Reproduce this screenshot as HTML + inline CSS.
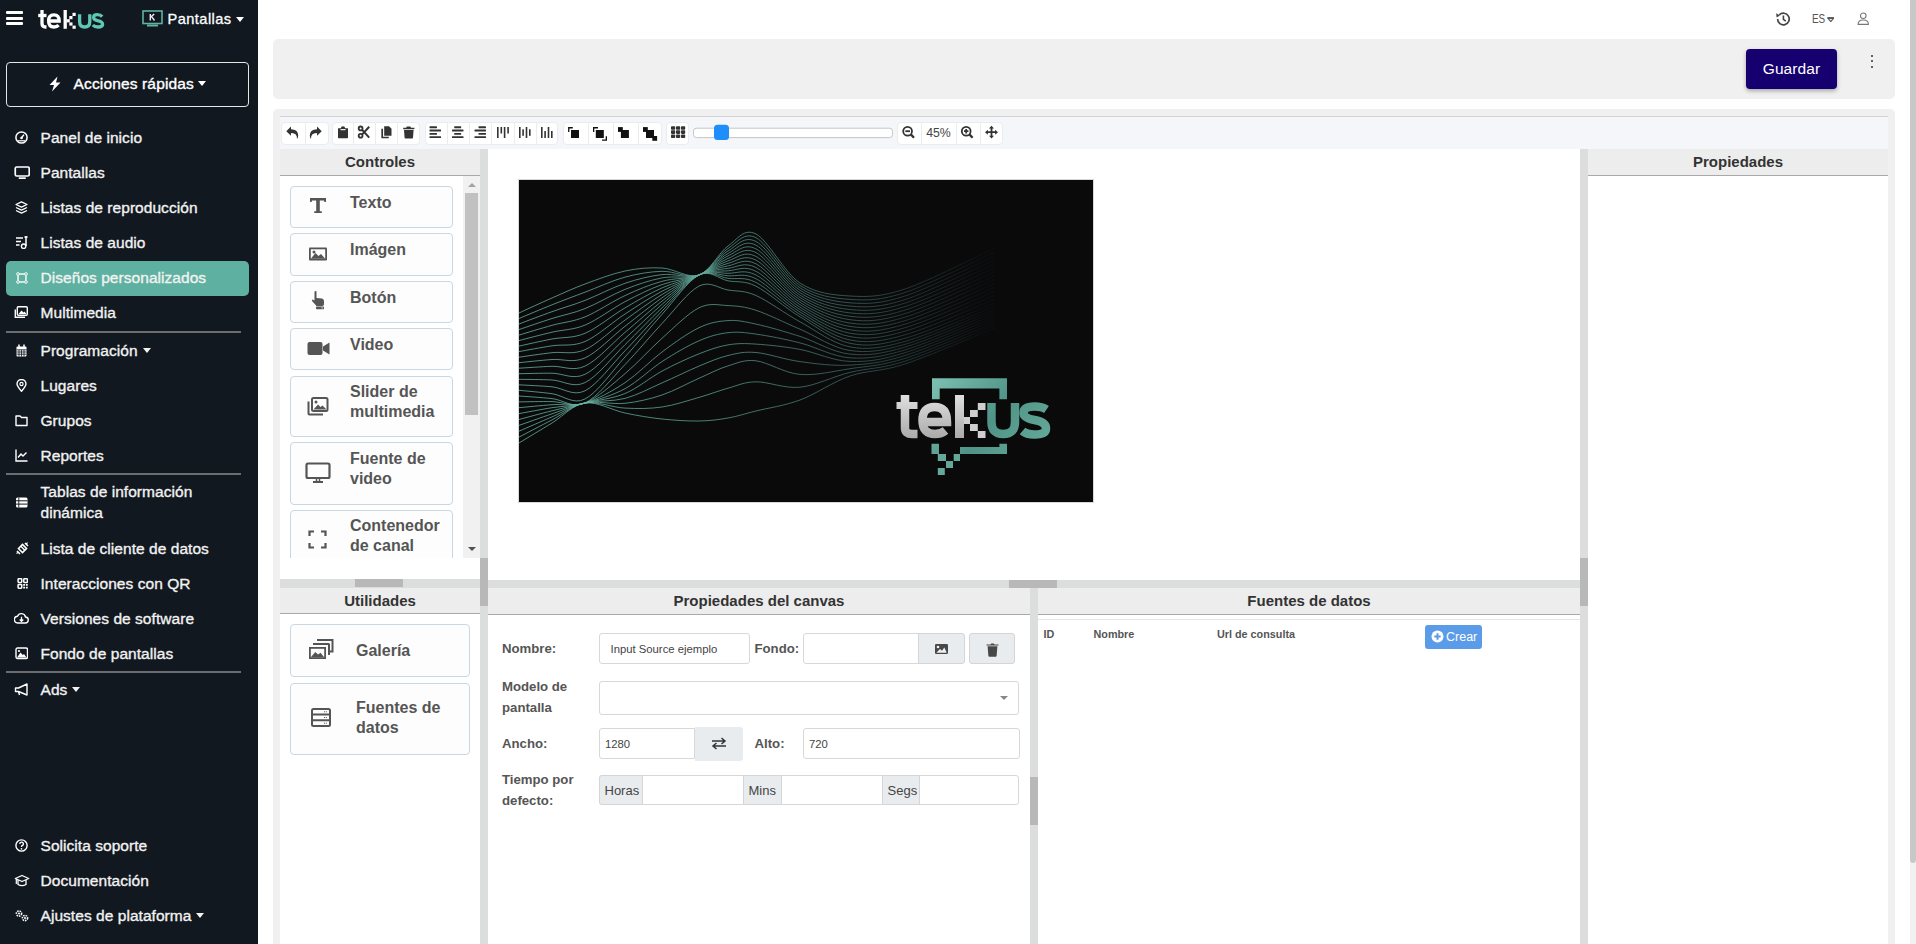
<!DOCTYPE html>
<html><head><meta charset="utf-8">
<style>
*{box-sizing:border-box;margin:0;padding:0}
html,body{width:1916px;height:944px;overflow:hidden;background:#fff;font-family:"Liberation Sans",sans-serif}
.a{position:absolute}
#sb{position:absolute;left:0;top:0;width:258px;height:944px;background:#111820;color:#f4f4f4}
.mi{position:absolute;left:6px;width:243px;height:35px;font-size:15.5px;line-height:35px;color:#f2f2f2;white-space:nowrap;letter-spacing:0.05px;-webkit-text-stroke:0.35px #f2f2f2}
.mi .t{position:absolute;left:34.5px;top:0}
.mi svg{position:absolute;left:9px;top:11px;width:13px;height:13px}
.sep{position:absolute;left:6px;width:235px;height:2px;background:#6b6d71}
.car{display:inline-block;width:0;height:0;border-left:4.5px solid transparent;border-right:4.5px solid transparent;border-top:5px solid #f2f2f2;vertical-align:middle;margin-left:5px;position:relative;top:-1px}
/* main */
.panel{position:absolute;background:#f0f0f0;border-radius:5px}
.hdr{position:absolute;background:#ededed;border-bottom:1px solid #a9a9a9;font-weight:bold;font-size:15px;color:#333;text-align:center;line-height:26px;height:26px}
.rz{position:absolute;background:#dcdedd}
.grip{position:absolute;background:#b8b8b8}
.ctl{position:absolute;left:290px;width:163px;border:1px solid #c9d7e2;border-radius:4px;background:#fdfdfd;color:#555;font-weight:bold;font-size:16px}
.ctl .t{position:absolute;left:59px;line-height:20px}
.ctl svg{position:absolute}
.lbl{position:absolute;font-weight:bold;font-size:13.2px;color:#555;line-height:21px}
.inp{position:absolute;border:1px solid #d8d8d8;border-radius:3px;background:#fff;font-size:11.3px;color:#444}
.btng{position:absolute;background:#e9ecef;border:1px solid #d5d5d5;border-radius:3px}
.tb{position:absolute;top:121.5px;height:23px;background:#fff;border-radius:4px;border:1px solid #eaecf0}
.tb i{position:absolute;top:0;height:21px;border-left:1px solid #eaecf0}
</style></head><body>

<!-- SIDEBAR -->
<div id="sb">
 <!-- hamburger -->
 <div class="a" style="left:6px;top:11px;width:17px;height:2.8px;background:#fff;border-radius:1px"></div>
 <div class="a" style="left:6px;top:16.8px;width:17px;height:2.8px;background:#fff;border-radius:1px"></div>
 <div class="a" style="left:6px;top:22.4px;width:17px;height:2.8px;background:#fff;border-radius:1px"></div>
 <!-- logo -->
 <svg class="a" style="left:36px;top:8px" width="70" height="24" viewBox="0 0 70 24">
  <g fill="none" stroke="#fff" stroke-width="3.3">
   <path d="M6 2 V15.5 Q6 19 9.5 19 H10.5"/>
   <path d="M2.2 7.5 H10.5"/>
   <path d="M12.6 13 H23.2 Q23.2 6.9 17.9 6.9 Q12.6 6.9 12.6 13 Q12.6 19 18 19 Q21 19 22.6 17.2"/>
   <path d="M29.2 2 V20.8"/>
  </g>
  <g fill="#fff">
   <rect x="36.5" y="4.8" width="3.2" height="3.2"/>
   <rect x="33.3" y="8" width="3.2" height="3.2"/>
   <rect x="30.6" y="11.2" width="3.2" height="3.2"/>
   <rect x="33.3" y="14.4" width="3.2" height="3.2"/>
   <rect x="36.5" y="17.6" width="3.2" height="3.2"/>
  </g>
  <g fill="none" stroke="#5ec8b4" stroke-width="3.3">
   <path d="M43.6 6.2 V13.5 Q43.6 19 48.6 19 Q53.8 19 53.8 13.5 V6.2"/>
   <path d="M66.2 8.6 Q64.5 6.6 61.2 6.6 Q57.6 6.6 57.6 9.4 Q57.6 11.6 61.5 12.6 Q66.6 13.6 66.6 16.2 Q66.6 19 62 19 Q58.5 19 56.8 17"/>
  </g>
 </svg>
 <!-- monitor icon -->
 <svg class="a" style="left:142px;top:10px" width="21" height="17" viewBox="0 0 21 17">
  <rect x="1" y="1" width="19" height="12.5" fill="none" stroke="#5fb3a1" stroke-width="1.6"/>
  <rect x="5" y="14.5" width="11" height="2" fill="#5fb3a1"/>
  <path d="M8.3 4 V10.5 M8.3 7.6 L12.2 4 M9.6 6.6 L12.5 10.5" stroke="#eee" stroke-width="1.4" fill="none"/>
 </svg>
 <div class="a" style="left:167.5px;top:7px;font-size:14.6px;line-height:24px;color:#fff;letter-spacing:0.45px;-webkit-text-stroke:0.3px #fff">Pantallas</div>
 <div class="a" style="left:235.5px;top:17px;width:0;height:0;border-left:4.5px solid transparent;border-right:4.5px solid transparent;border-top:5.5px solid #fff"></div>

 <!-- acciones rapidas -->
 <div class="a" style="left:6px;top:62px;width:243px;height:45px;border:1.3px solid #e6e6e6;border-radius:4px"></div>
 <svg class="a" style="left:48px;top:76px" width="14" height="16" viewBox="0 0 14 16"><path d="M9.5 0.5 L1.5 9 H6 L4 15.5 L12.5 6.5 H8 Z" fill="#fff"/></svg>
 <div class="a" style="left:73.5px;top:72px;font-size:15.5px;line-height:24px;color:#fff;white-space:nowrap;letter-spacing:0.15px;-webkit-text-stroke:0.35px #fff">Acciones rápidas<span class="car" style="border-top-color:#fff;margin-left:4px"></span></div>

 <div class="mi" style="top:120px"><svg viewBox="0 0 13 13"><circle cx="6.5" cy="6.5" r="5.6" fill="none" stroke="#fff" stroke-width="1.5"/><path d="M6.5 6.8 L9 3.6" stroke="#fff" stroke-width="1.5"/><circle cx="6.5" cy="7" r="1.3" fill="#fff"/><path d="M3 9.8 H10" stroke="#fff" stroke-width="1.2"/></svg><span class="t">Panel de inicio</span></div>
 <div class="mi" style="top:155px"><svg viewBox="0 0 16 13" style="width:16.5px;height:13px;left:7.5px;top:11px"><rect x="1" y="1" width="14" height="9" rx="1.5" fill="none" stroke="#fff" stroke-width="1.7"/><rect x="4.5" y="11.3" width="7" height="1.7" fill="#fff"/></svg><span class="t">Pantallas</span></div>
 <div class="mi" style="top:190px"><svg viewBox="0 0 13 13"><path d="M6.5 0.8 L12 3.5 L6.5 6.2 L1 3.5 Z M1 6.5 L6.5 9.2 L12 6.5 M1 9.5 L6.5 12.2 L12 9.5" fill="none" stroke="#fff" stroke-width="1.3" stroke-linejoin="round"/></svg><span class="t">Listas de reproducción</span></div>
 <div class="mi" style="top:225px"><svg viewBox="0 0 13 13"><path d="M1 2 H8 M1 5.5 H6 M1 9 H4.5" stroke="#fff" stroke-width="1.5"/><path d="M11 1 V10" stroke="#fff" stroke-width="1.5"/><path d="M9.5 1 H12.5" stroke="#fff" stroke-width="1.8"/><circle cx="8.6" cy="10.2" r="2.2" fill="none" stroke="#fff" stroke-width="1.4"/></svg><span class="t">Listas de audio</span></div>
 <div class="a" style="left:6px;top:261px;width:243px;height:35px;background:#5eb1a0;border-radius:5px"></div>
 <div class="mi" style="top:260px"><svg viewBox="0 0 13 13" style="left:10px;top:11.5px;width:12px;height:12px"><rect x="2.2" y="2.2" width="8.6" height="8.6" fill="none" stroke="#fff" stroke-width="1.5"/><circle cx="2.2" cy="2.2" r="1.5" fill="#5eb1a0" stroke="#fff" stroke-width="1"/><circle cx="10.8" cy="2.2" r="1.5" fill="#5eb1a0" stroke="#fff" stroke-width="1"/><circle cx="2.2" cy="10.8" r="1.5" fill="#5eb1a0" stroke="#fff" stroke-width="1"/><circle cx="10.8" cy="10.8" r="1.5" fill="#5eb1a0" stroke="#fff" stroke-width="1"/></svg><span class="t">Diseños personalizados</span></div>
 <div class="mi" style="top:295px"><svg viewBox="0 0 13 13" style="width:14px;left:8px"><rect x="2.8" y="0.8" width="10" height="8.5" rx="1" fill="none" stroke="#fff" stroke-width="1.4"/><path d="M0.8 3.5 V11.2 H10.5" fill="none" stroke="#fff" stroke-width="1.4"/><path d="M4 8 L7 4.5 L9 6.5 L10 5.5 L12 8 Z" fill="#fff"/></svg><span class="t">Multimedia</span></div>
 <div class="sep" style="top:331px"></div>
 <div class="mi" style="top:333px"><svg viewBox="0 0 13 13"><rect x="1.5" y="2.5" width="10" height="10" rx="1" fill="#fff"/><path d="M4 0.5 V3 M9 0.5 V3" stroke="#fff" stroke-width="1.5"/><path d="M1.5 5.8 H11.5 M1.5 8 H11.5 M1.5 10.2 H11.5 M4 5.8 V12.5 M6.5 5.8 V12.5 M9 5.8 V12.5" stroke="#111820" stroke-width="0.8"/></svg><span class="t">Programación<span class="car"></span></span></div>
 <div class="mi" style="top:368px"><svg viewBox="0 0 13 13"><path d="M6.5 12.3 C3.5 8.8 2 6.8 2 5 A4.5 4.5 0 0 1 11 5 C11 6.8 9.5 8.8 6.5 12.3 Z" fill="none" stroke="#fff" stroke-width="1.4"/><circle cx="6.5" cy="5" r="1.6" fill="none" stroke="#fff" stroke-width="1.2"/></svg><span class="t">Lugares</span></div>
 <div class="mi" style="top:403px"><svg viewBox="0 0 13 13"><path d="M1 2 H5 L6.5 3.5 H12 V11.5 H1 Z" fill="none" stroke="#fff" stroke-width="1.4" stroke-linejoin="round"/></svg><span class="t">Grupos</span></div>
 <div class="mi" style="top:438px"><svg viewBox="0 0 13 13"><path d="M1 0.5 V12 H12.5" fill="none" stroke="#fff" stroke-width="1.4"/><path d="M3 8.5 L6 5 L8 7 L11.5 3.5" fill="none" stroke="#fff" stroke-width="1.4"/></svg><span class="t">Reportes</span></div>
 <div class="sep" style="top:473px"></div>
 <div class="mi" style="top:475px;height:55px"><svg viewBox="0 0 13 13" style="top:21px"><rect x="1" y="1.5" width="11.5" height="10" rx="1.5" fill="#fff"/><path d="M1 4.8 H12.5 M1 8.1 H12.5" stroke="#111820" stroke-width="1"/><path d="M3.8 1.5 V11.5" stroke="#111820" stroke-width="0.9"/></svg><span class="t" style="line-height:21px;top:6px">Tablas de información<br>dinámica</span></div>
 <div class="mi" style="top:531px"><svg viewBox="0 0 13 13" style="left:9.5px;top:11px;width:13px;height:13px"><path d="M2.5 6.5 L6.5 2.5 L10.5 6.5 L6.5 10.5 Z" fill="none" stroke="#fff" stroke-width="1.6"/><path d="M4.8 4.2 L8.8 8.2" stroke="#fff" stroke-width="1.4"/><path d="M9 1 L12 4 M1 9 L4 12" stroke="#fff" stroke-width="1.6"/><path d="M9.8 2.2 L11.6 0.6 M0.6 11.6 L2.2 9.8" stroke="#fff" stroke-width="1.2"/></svg><span class="t">Lista de cliente de datos</span></div>
 <div class="mi" style="top:566px"><svg viewBox="0 0 13 13" style="left:10.5px;top:12px;width:11.5px;height:11px"><rect x="1" y="1" width="4.3" height="4.3" rx="0.8" fill="none" stroke="#fff" stroke-width="1.8"/><rect x="7.7" y="1" width="4.3" height="4.3" rx="0.8" fill="none" stroke="#fff" stroke-width="1.8"/><rect x="1" y="7.7" width="4.3" height="4.3" rx="0.8" fill="none" stroke="#fff" stroke-width="1.8"/><path d="M7 7 H9.2 V9.2 H7 Z M10.2 7 H12.4 V9.2 H10.2 Z M7 10.2 H9.2 V12.4 H7 Z M10.2 10.2 H12.4 V12.4 H10.2 Z" fill="#fff"/></svg><span class="t">Interacciones con QR</span></div>
 <div class="mi" style="top:601px"><svg viewBox="0 0 14 13" style="width:15px;left:8px"><path d="M3.5 11 H10.5 A3 3 0 0 0 11 5 A4.2 4.2 0 0 0 3 4.2 A3.4 3.4 0 0 0 3.5 11 Z" fill="none" stroke="#fff" stroke-width="1.4"/><path d="M7 4.8 V9.2 M5.2 7.5 L7 9.3 L8.8 7.5" fill="none" stroke="#fff" stroke-width="1.3"/></svg><span class="t">Versiones de software</span></div>
 <div class="mi" style="top:636px"><svg viewBox="0 0 13 13"><rect x="1" y="1" width="11.5" height="10.5" rx="1.5" fill="none" stroke="#fff" stroke-width="1.4"/><path d="M2 10.5 L5.5 5.5 L7.8 8 L9 7 L11.5 10.5 Z" fill="#fff"/><circle cx="4" cy="4" r="1.1" fill="#fff"/></svg><span class="t">Fondo de pantallas</span></div>
 <div class="sep" style="top:671px"></div>
 <div class="mi" style="top:672px"><svg viewBox="0 0 14 13" style="width:15px;left:8px"><path d="M1 5 H4 L12.5 1 V12 L4 8.5 H1 Z" fill="none" stroke="#fff" stroke-width="1.4" stroke-linejoin="round"/><path d="M4 8.5 L5 12" stroke="#fff" stroke-width="1.4"/></svg><span class="t">Ads<span class="car"></span></span></div>

 <div class="mi" style="top:828px"><svg viewBox="0 0 13 13"><circle cx="6.5" cy="6.5" r="5.6" fill="none" stroke="#fff" stroke-width="1.4"/><path d="M4.8 5 A1.8 1.8 0 1 1 7 6.7 C6.6 6.9 6.5 7.2 6.5 8" fill="none" stroke="#fff" stroke-width="1.4"/><circle cx="6.5" cy="9.8" r="0.9" fill="#fff"/></svg><span class="t">Solicita soporte</span></div>
 <div class="mi" style="top:863px"><svg viewBox="0 0 15 13" style="width:16px;left:8px"><path d="M0.8 4.5 L7.5 1.5 L14.2 4.5 L7.5 7.5 Z" fill="none" stroke="#fff" stroke-width="1.3" stroke-linejoin="round"/><path d="M3.5 6 V10.5 Q7.5 12.8 11.5 10.5 V6" fill="none" stroke="#fff" stroke-width="1.3"/><path d="M1.8 5 V10" stroke="#fff" stroke-width="1.2"/></svg><span class="t">Documentación</span></div>
 <div class="mi" style="top:898px"><svg viewBox="0 0 15 13" style="width:16px;left:8px"><circle cx="4.5" cy="4.5" r="2.6" fill="none" stroke="#fff" stroke-width="1.6" stroke-dasharray="1.6 0.9"/><circle cx="4.5" cy="4.5" r="1" fill="#fff"/><circle cx="10.5" cy="9" r="2.6" fill="none" stroke="#fff" stroke-width="1.6" stroke-dasharray="1.6 0.9"/><circle cx="10.5" cy="9" r="1" fill="#fff"/></svg><span class="t">Ajustes de plataforma<span class="car"></span></span></div>
</div>

<!-- MAIN -->
<div id="main">
 <!-- top header icons -->
 <svg class="a" style="left:1775px;top:11px" width="16" height="16" viewBox="0 0 16 16"><path d="M2.6 8 A5.8 5.8 0 1 0 4.3 3.9" fill="none" stroke="#444" stroke-width="1.7"/><path d="M1.2 2.2 L4.9 4.4 L1.6 6.6 Z" fill="#444"/><path d="M8.4 4.6 V8.4 L10.8 10.2" fill="none" stroke="#444" stroke-width="1.6"/></svg>
 <div class="a" style="left:1811.5px;top:10.8px;font-size:12.4px;line-height:16px;color:#555;transform:scaleX(0.8);transform-origin:0 0">ES</div>
 <svg class="a" style="left:1826.5px;top:16.8px" width="7.5" height="5.5" viewBox="0 0 8 6"><path d="M0.7 0.9 H7.3 L4 5.1 Z" fill="none" stroke="#555" stroke-width="1.2" stroke-linejoin="round"/><path d="M0.7 1.2 H7.3" stroke="#555" stroke-width="1.8"/></svg>
 <svg class="a" style="left:1857px;top:12px" width="12.5" height="13.5" viewBox="0 0 14 15"><circle cx="7" cy="4.2" r="3.1" fill="none" stroke="#777" stroke-width="1.2"/><path d="M1.2 13.8 Q1.2 8.8 7 8.8 Q12.8 8.8 12.8 13.8 Z" fill="none" stroke="#777" stroke-width="1.2" stroke-linejoin="round"/></svg>

 <!-- top panel -->
 <div class="panel" style="left:273px;top:39px;width:1622px;height:60px"></div>
 <div class="a" style="left:1746px;top:49px;width:91px;height:40px;background:#16006f;border-radius:4px;box-shadow:0 2px 4px rgba(0,0,0,0.3);color:#fff;font-size:15.5px;line-height:40px;text-align:center;letter-spacing:0.1px">Guardar</div>
 <div class="a" style="left:1870.5px;top:54.5px;width:2.2px;height:2.2px;background:#333;border-radius:1px"></div>
 <div class="a" style="left:1870.5px;top:60px;width:2.2px;height:2.2px;background:#333;border-radius:1px"></div>
 <div class="a" style="left:1870.5px;top:65.5px;width:2.2px;height:2.2px;background:#333;border-radius:1px"></div>

 <!-- editor panel -->
 <div class="panel" style="left:273px;top:109px;width:1622px;height:860px"></div>
 <div class="a" style="left:280px;top:116px;width:1608px;height:1px;background:#d3d3d3"></div>
 <div class="a" style="left:280px;top:117px;width:1608px;height:32px;background:#f5f6fa"></div>
 <!-- toolbar groups -->
 <div class="tb" style="left:280.5px;width:48px"><i style="left:23px"></i></div>
 <div class="tb" style="left:332px;width:88px"><i style="left:20px"></i><i style="left:42px"></i><i style="left:64px"></i></div>
 <div class="tb" style="left:425px;width:133px"><i style="left:20.5px"></i><i style="left:42.5px"></i><i style="left:65px"></i><i style="left:87.5px"></i><i style="left:109.5px"></i></div>
 <div class="tb" style="left:562.5px;width:99.5px"><i style="left:24px"></i><i style="left:49px"></i><i style="left:74px"></i></div>
 <div class="tb" style="left:665.5px;width:23.5px"></div>
 <div class="tb" style="left:896.5px;width:106.5px"><i style="left:23px"></i><i style="left:58px"></i><i style="left:82px"></i></div>
 <svg class="a" style="left:280px;top:117px" width="730" height="32" viewBox="280 117 730 32">
  <g fill="#333">
   <!-- undo -->
   <path d="M286.3 131.2 L291 126.6 V129.3 Q298 129.3 298.2 135.5 Q298.2 137.5 297 139 Q297.4 132.8 291 133 V135.8 Z"/>
   <!-- redo -->
   <path d="M321.7 131.2 L317 126.6 V129.3 Q310 129.3 309.8 135.5 Q309.8 137.5 311 139 Q310.6 132.8 317 133 V135.8 Z"/>
   <!-- paste -->
   <path d="M338.3 128.3 H340.8 Q341 126.3 343 126.3 Q345 126.3 345.2 128.3 H347.7 Q348 128.3 348 129 V137.6 Q348 138.3 347.3 138.3 H338.7 Q338 138.3 338 137.6 V129 Q338 128.3 338.3 128.3 Z"/>
   <rect x="340.5" y="129.1" width="5" height="1.1" fill="#fff"/>
   <!-- trash -->
   <path d="M403.2 127.7 H406.2 L406.8 126.5 H410.4 L411 127.7 H414.4 V129.3 H403.2 Z M404 130 H413.6 L413 137.7 Q412.9 138.4 412.2 138.4 H405.4 Q404.7 138.4 404.6 137.7 Z"/>
   <!-- align icons -->
   <rect x="429.5" y="126.3" width="7.5" height="1.9" rx="0.4"/><rect x="429.5" y="129.6" width="11.5" height="1.9" rx="0.4"/><rect x="429.5" y="132.9" width="7.5" height="1.9" rx="0.4"/><rect x="429.5" y="136.2" width="11.5" height="1.9" rx="0.4"/>
   <rect x="454.2" y="126.3" width="7" height="1.9" rx="0.4"/><rect x="452" y="129.6" width="11.5" height="1.9" rx="0.4"/><rect x="454.2" y="132.9" width="7" height="1.9" rx="0.4"/><rect x="452" y="136.2" width="11.5" height="1.9" rx="0.4"/>
   <rect x="478.5" y="126.3" width="7.5" height="1.9" rx="0.4"/><rect x="474.5" y="129.6" width="11.5" height="1.9" rx="0.4"/><rect x="478.5" y="132.9" width="7.5" height="1.9" rx="0.4"/><rect x="474.5" y="136.2" width="11.5" height="1.9" rx="0.4"/>
   <!-- valign top -->
   <rect x="497" y="127" width="1.6" height="11"/><rect x="500.5" y="127" width="1.6" height="6.5"/><rect x="503.8" y="127" width="1.6" height="11"/><rect x="507.3" y="127" width="1.6" height="6.5"/>
   <!-- valign middle -->
   <rect x="519" y="127" width="1.6" height="11"/><rect x="522.3" y="129.3" width="1.6" height="6.5"/><rect x="525.7" y="127" width="1.6" height="11"/><rect x="529" y="129.3" width="1.6" height="6.5"/>
   <!-- valign bottom -->
   <rect x="541" y="127" width="1.6" height="11"/><rect x="544.3" y="131" width="1.6" height="7"/><rect x="547.7" y="127" width="1.6" height="11"/><rect x="551" y="131" width="1.6" height="7"/>
  </g>
  <g fill="#111">
   <!-- bring forward -->
   <path d="M568.1 127.1 H572.8 V128.4 H569.4 V131.9 H568.1 Z"/><rect x="571" y="130" width="8" height="8"/>
   <!-- bring to front -->
   <path d="M593 127.1 H598 V128.4 H594.3 V131.9 H593 Z"/><rect x="595.8" y="130" width="8" height="8"/><path d="M607 140.8 H602 V139.5 H605.7 V136.3 H607 Z"/>
   <!-- send backward -->
   <rect x="618" y="127.1" width="4.8" height="4.8"/><rect x="620.9" y="130" width="8" height="8"/>
   <!-- send to back -->
   <rect x="643" y="127.1" width="4.8" height="4.8"/><rect x="646" y="130" width="8" height="8"/><rect x="652.3" y="136" width="4.8" height="4.8"/>
  </g>
  <g fill="#333">
   <rect x="671" y="126.2" width="4.2" height="3.6" rx="0.8"/><rect x="676" y="126.2" width="4.2" height="3.6" rx="0.8"/><rect x="681" y="126.2" width="4.2" height="3.6" rx="0.8"/>
   <rect x="671" y="130.3" width="4.2" height="3.6" rx="0.8"/><rect x="676" y="130.3" width="4.2" height="3.6" rx="0.8"/><rect x="681" y="130.3" width="4.2" height="3.6" rx="0.8"/>
   <rect x="671" y="134.4" width="4.2" height="3.6" rx="0.8"/><rect x="676" y="134.4" width="4.2" height="3.6" rx="0.8"/><rect x="681" y="134.4" width="4.2" height="3.6" rx="0.8"/>
  </g>
  <!-- cut -->
  <g fill="none" stroke="#333" stroke-width="1.5">
   <circle cx="360.6" cy="135.8" r="1.9" stroke-width="1.8"/><circle cx="360.6" cy="128.4" r="1.9" stroke-width="1.8"/>
   <path d="M362.2 134.4 L369.2 126.8 M362.2 129.8 L369.2 137.6" stroke-width="2"/>
  </g>
  <!-- copy -->
  <path d="M382.2 128.8 V137.5 H388.8" fill="none" stroke="#333" stroke-width="1.7"/>
  <path d="M384.2 126.3 H389 L391.5 128.8 V135.7 H384.2 Z" fill="#333"/>
  <!-- slider -->
  <rect x="693.5" y="128.2" width="199" height="9.4" rx="3" fill="#fff" stroke="#c6c6c6" stroke-width="1"/>
  <rect x="714" y="124.8" width="15" height="15.2" rx="3.5" fill="#1e8efa"/>
  <!-- zoom out -->
  <g fill="none" stroke="#333" stroke-width="1.8"><circle cx="907.6" cy="131.2" r="4.4"/><path d="M910.8 134.4 L914 137.8" stroke-width="2.3"/><path d="M905.3 131.2 H910"/></g>
  <g fill="none" stroke="#333" stroke-width="1.8"><circle cx="966.2" cy="131.2" r="4.4"/><path d="M969.4 134.4 L972.6 137.8" stroke-width="2.3"/><path d="M964 131.2 H968.4 M966.2 129 V133.4"/></g>
  <!-- move -->
  <g fill="#333"><path d="M991.5 125.8 L994 128.6 H992.4 V131.3 H995.1 V129.7 L998 132.2 L995.1 134.7 V133.1 H992.4 V135.8 H994 L991.5 138.6 L989 135.8 H990.6 V133.1 H987.9 V134.7 L985 132.2 L987.9 129.7 V131.3 H990.6 V128.6 H989 Z"/></g>
 </svg>
 <div class="a" style="left:921px;top:124.5px;width:35px;text-align:center;font-size:12.3px;line-height:16px;color:#444">45%</div>
 <!-- WEST PANE -->
 <div class="a" style="left:280px;top:149px;width:200px;height:795px;background:#fff"></div>
 <div class="hdr" style="left:280px;top:149px;width:200px;height:27px">Controles</div>
 <!-- controls scrollbar -->
 <div class="a" style="left:463px;top:176px;width:17px;height:382px;background:#f1f1f1"></div>
 <div class="a" style="left:465px;top:193px;width:13px;height:222px;background:#c1c1c1"></div>
 <div class="a" style="left:467.5px;top:183px;width:0;height:0;border-left:4px solid transparent;border-right:4px solid transparent;border-bottom:4px solid #a3a3a3"></div>
 <div class="a" style="left:467.5px;top:547px;width:0;height:0;border-left:4px solid transparent;border-right:4px solid transparent;border-top:4px solid #505050"></div>
 <!-- control items -->
 <div class="ctl" style="top:186px;height:42px"><span class="t" style="top:6px">Texto</span>
  <svg style="left:18px;top:10px" width="18" height="17" viewBox="0 0 18 17"><path d="M1 1 H17 V5 H15.6 L14.8 3.4 H10.8 V14.2 H12.8 V16 H5.2 V14.2 H7.2 V3.4 H3.2 L2.4 5 H1 Z" fill="#555"/></svg></div>
 <div class="ctl" style="top:233px;height:42.5px"><span class="t" style="top:6px">Imágen</span>
  <svg style="left:16.5px;top:11.5px" width="20" height="16" viewBox="0 0 20 16"><rect x="1" y="1.5" width="18" height="13" rx="1" fill="#555"/><rect x="2.8" y="3.3" width="14.4" height="9.4" fill="#fdfdfd"/><path d="M2.8 12.7 L7.5 7 L10.5 10 L13 8 L17.2 12.7 Z" fill="#555"/><circle cx="6" cy="6" r="1.5" fill="#555"/></svg></div>
 <div class="ctl" style="top:281px;height:42px"><span class="t" style="top:6px">Botón</span>
  <svg style="left:19px;top:8px" width="16" height="20" viewBox="0 0 16 20"><path d="M4.5 1.5 Q5.5 0.5 6.5 1.5 V8 L12 8.5 Q14 9 14 11 V14.5 Q13.5 16 12 16 H6.5 L2 11 Q1.5 10 2.5 9.5 L4.5 10.5 Z" fill="#555"/><rect x="6" y="16.6" width="8" height="2.6" rx="0.8" fill="#555"/><rect x="11.5" y="17.4" width="1.2" height="1" fill="#fff"/></svg></div>
 <div class="ctl" style="top:328px;height:42px"><span class="t" style="top:6px">Video</span>
  <svg style="left:16px;top:11px" width="24" height="17" viewBox="0 0 24 17"><rect x="0.5" y="2" width="15" height="13" rx="2" fill="#555"/><path d="M16 6.5 L22.5 2.5 V14.5 L16 10.5 Z" fill="#555"/></svg></div>
 <div class="ctl" style="top:376px;height:61px"><span class="t" style="top:5px">Slider de<br>multimedia</span>
  <svg style="left:16px;top:19px" width="22" height="20" viewBox="0 0 22 20"><path d="M1.5 5.5 V17.5 Q1.5 18.5 2.5 18.5 H16" fill="none" stroke="#555" stroke-width="2"/><rect x="5" y="2" width="15.5" height="13" rx="1.5" fill="none" stroke="#555" stroke-width="2"/><path d="M6.5 13.5 L11 8.5 L13.5 11 L15.5 9.5 L19.5 13.5 Z" fill="#555"/><circle cx="9" cy="6" r="1.5" fill="#555"/></svg></div>
 <div class="ctl" style="top:442px;height:62.5px"><span class="t" style="top:6px">Fuente de<br>video</span>
  <svg style="left:14px;top:19px" width="26" height="22" viewBox="0 0 26 22"><rect x="1.5" y="1.5" width="23" height="14.5" rx="1.5" fill="none" stroke="#555" stroke-width="2.2"/><path d="M8 20 H18" stroke="#555" stroke-width="2"/><path d="M11.5 16 V20 M14.5 16 V20" stroke="#555" stroke-width="1.5"/></svg></div>
 <div class="a" style="left:280px;top:510px;width:183px;height:48px;overflow:hidden">
  <div class="ctl" style="left:10px;top:0;height:62px"><span class="t" style="top:5px">Contenedor<br>de canal</span>
   <svg style="left:17px;top:19px" width="19" height="19" viewBox="0 0 19 19"><path d="M1.5 6 V1.5 H6 M13 1.5 H17.5 V6 M17.5 13 V17.5 H13 M6 17.5 H1.5 V13" fill="none" stroke="#555" stroke-width="2.2"/></svg></div>
 </div>
 <!-- west horizontal resizer -->
 <div class="rz" style="left:280px;top:579px;width:200px;height:9px"></div>
 <div class="grip" style="left:355px;top:579px;width:48px;height:8px"></div>
 <div class="hdr" style="left:280px;top:588px;width:200px;height:26px;line-height:25px">Utilidades</div>
 <div class="ctl" style="top:624px;height:53px;width:180px"><span class="t" style="left:65px;top:16px">Galería</span>
  <svg style="left:17px;top:13px" width="26" height="22" viewBox="0 0 26 22"><path d="M1 9 H18 V21 H1 Z" fill="#555"/><rect x="2.8" y="10.8" width="13.4" height="8.4" fill="#fdfdfd"/><path d="M2.8 19.2 L7.3 14 L10 16.5 L12.5 14.8 L16.2 19.2 Z" fill="#555"/><path d="M5 6 H21 V17" fill="none" stroke="#555" stroke-width="2"/><path d="M9 2 H24.5 V13.5 H22" fill="none" stroke="#555" stroke-width="2"/><rect x="21.3" y="4.5" width="1.3" height="1.3" fill="#fdfdfd"/></svg></div>
 <div class="ctl" style="top:683px;height:72px;width:180px"><span class="t" style="left:65px;top:14px">Fuentes de<br>datos</span>
  <svg style="left:20px;top:24px" width="21" height="19" viewBox="0 0 21 19"><rect x="1" y="1" width="18" height="17" rx="1.5" fill="none" stroke="#555" stroke-width="2"/><path d="M1 6.6 H19 M1 12.3 H19" stroke="#555" stroke-width="2"/><path d="M13 3.8 H16.5 M13 9.5 H16.5 M13 15.2 H16.5" stroke="#555" stroke-width="1" stroke-dasharray="1 0.8"/></svg></div>

 <!-- west vertical resizer -->
 <div class="rz" style="left:480px;top:149px;width:8px;height:795px"></div>
 <div class="grip" style="left:480px;top:558px;width:8px;height:48px"></div>

 <!-- CENTER -->
 <div class="a" style="left:488px;top:149px;width:1092px;height:431px;background:#fff"></div>
 <div class="rz" style="left:488px;top:580px;width:1092px;height:8px"></div>
 <div class="grip" style="left:1009px;top:580px;width:48px;height:8px"></div>
 <!-- south west -->
 <div class="a" style="left:488px;top:588px;width:542px;height:356px;background:#fff"></div>
 <div class="hdr" style="left:488px;top:588px;width:542px;height:27px;line-height:26px">Propiedades del canvas</div>
 <div class="rz" style="left:1030px;top:588px;width:8px;height:356px"></div>
 <div class="grip" style="left:1030px;top:777px;width:8px;height:48px"></div>
 <!-- south east -->
 <div class="a" style="left:1038px;top:588px;width:542px;height:356px;background:#fff"></div>
 <div class="hdr" style="left:1038px;top:588px;width:542px;height:27px;line-height:26px">Fuentes de datos</div>
 <!-- east resizer -->
 <div class="rz" style="left:1580px;top:149px;width:8px;height:795px"></div>
 <div class="grip" style="left:1580px;top:558px;width:8px;height:48px"></div>
 <!-- EAST -->
 <div class="a" style="left:1588px;top:149px;width:300px;height:795px;background:#fff"></div>
 <div class="hdr" style="left:1588px;top:149px;width:300px;height:27px">Propiedades</div>
 <!-- canvas props form -->
 <div class="lbl" style="left:502px;top:638px">Nombre:</div>
 <div class="inp" style="left:599px;top:633px;width:151px;height:31px;padding-left:10.5px;line-height:30px">Input Source ejemplo</div>
 <div class="lbl" style="left:754.5px;top:638px">Fondo:</div>
 <div class="inp" style="left:803px;top:633px;width:116px;height:31px;border-radius:3px 0 0 3px"></div>
 <div class="btng" style="left:918px;top:633px;width:46.5px;height:31px;border-radius:0 3px 3px 0"></div>
 <svg class="a" style="left:935px;top:644px" width="13" height="10" viewBox="0 0 13 10"><rect x="0" y="0" width="13" height="10" rx="1.2" fill="#474747"/><path d="M1.3 8.8 L5 5 L7 6.8 L9.3 3.6 L11.8 8.8 Z" fill="#eef0f2"/><circle cx="3" cy="3" r="1.3" fill="#eef0f2"/></svg>
 <div class="btng" style="left:969px;top:633px;width:45.5px;height:31px"></div>
 <svg class="a" style="left:985.5px;top:643px" width="13" height="14" viewBox="0 0 13 14"><path d="M0.5 1.4 H4.5 L5.2 0.4 H7.8 L8.5 1.4 H12.5 V2.6 H0.5 Z M1.6 3.2 H11.4 L10.6 13 Q10.5 13.8 9.6 13.8 H3.4 Q2.5 13.8 2.4 13 Z" fill="#474747"/></svg>

 <div class="lbl" style="left:502px;top:676px">Modelo de<br>pantalla</div>
 <div class="inp" style="left:599px;top:681px;width:420px;height:33.5px"></div>
 <div class="a" style="left:999.5px;top:695.5px;width:0;height:0;border-left:4px solid transparent;border-right:4px solid transparent;border-top:4px solid #888"></div>

 <div class="lbl" style="left:502px;top:733px">Ancho:</div>
 <div class="inp" style="left:599px;top:728px;width:96px;height:31px;padding-left:5px;line-height:30px;border-radius:3px 0 0 3px">1280</div>
 <div class="btng" style="left:695px;top:727px;width:48px;height:33.5px;border:none;border-radius:0 3px 3px 0"></div>
 <svg class="a" style="left:711px;top:737px" width="16" height="13" viewBox="0 0 16 13"><path d="M1 4 H14 M10.5 1 L14 4 L10.5 7 M15 9 H2 M5.5 6 L2 9 L5.5 12" fill="none" stroke="#333" stroke-width="1.5"/></svg>
 <div class="lbl" style="left:754.5px;top:733px">Alto:</div>
 <div class="inp" style="left:803px;top:728px;width:216.5px;height:31px;padding-left:5px;line-height:30px">720</div>

 <div class="lbl" style="left:502px;top:769px">Tiempo por<br>defecto:</div>
 <div class="inp" style="left:599px;top:775px;width:420px;height:30px"></div>
 <div class="btng" style="left:599px;top:775px;width:44px;height:30px;border-radius:3px 0 0 3px;font-size:13px;color:#444;line-height:30px;padding-left:4.5px">Horas</div>
 <div class="btng" style="left:743px;top:775px;width:38.5px;height:30px;border-radius:0;font-size:13px;color:#444;line-height:30px;padding-left:4.5px">Mins</div>
 <div class="btng" style="left:882px;top:775px;width:38px;height:30px;border-radius:0;font-size:13px;color:#444;line-height:30px;padding-left:4.5px">Segs</div>

 <!-- data sources table -->
 <div class="a" style="left:1038px;top:618.5px;width:542px;height:1px;background:#e6e6e6"></div>
 <div class="a" style="left:1043.5px;top:627px;font-size:10.8px;font-weight:bold;color:#555;line-height:14px">ID</div>
 <div class="a" style="left:1093.5px;top:627px;font-size:10.8px;font-weight:bold;color:#555;line-height:14px">Nombre</div>
 <div class="a" style="left:1217px;top:627px;font-size:10.8px;font-weight:bold;color:#555;line-height:14px">Url de consulta</div>
 <div class="a" style="left:1425px;top:625px;width:57px;height:23.5px;background:#5b9ce8;border-radius:3px;color:#fff;font-size:12.5px;line-height:24.5px;padding-left:21px">Crear</div>
 <svg class="a" style="left:1431px;top:629.5px" width="14" height="14" viewBox="0 0 14 14"><circle cx="6.5" cy="6.5" r="6" fill="#fff"/><path d="M6.5 3.3 V9.7 M3.3 6.5 H9.7" stroke="#5b9ce8" stroke-width="2"/></svg>

 <!-- CANVAS IMAGE -->
 <div class="a" style="left:518px;top:179px;width:576px;height:324px;border:1px solid #d8d8d8;background:#0a0a0a"></div>
 <svg class="a" style="left:519px;top:180px" width="574" height="322" viewBox="0 1 574 322">
  <defs>
   <linearGradient id="wg" gradientUnits="userSpaceOnUse" x1="0" y1="0" x2="480" y2="0">
    <stop offset="0" stop-color="#6cb8a8"/><stop offset="0.4" stop-color="#5fa597"/><stop offset="0.7" stop-color="#3d6462"/><stop offset="0.97" stop-color="#0d1114"/>
   </linearGradient>
   <linearGradient id="silver" gradientUnits="userSpaceOnUse" x1="0" y1="214" x2="0" y2="260"><stop offset="0" stop-color="#e2e2e2"/><stop offset="1" stop-color="#a9a9a9"/></linearGradient>
   <linearGradient id="teal" gradientUnits="userSpaceOnUse" x1="410" y1="199" x2="530" y2="290"><stop offset="0" stop-color="#7fc2b4"/><stop offset="0.5" stop-color="#4f9486"/><stop offset="1" stop-color="#6aae9f"/></linearGradient>
  </defs>
  <g fill="none" stroke="url(#wg)" stroke-width="0.75" opacity="1">
<path d="M-14.0 141.0 C-11.7 139.8 -7.8 137.7 0.0 134.0 C7.8 130.3 22.0 123.8 33.0 119.0 C44.0 114.2 53.8 109.5 66.0 105.0 C78.2 100.5 93.2 94.7 106.0 92.0 C118.8 89.3 130.7 88.3 143.0 89.0 C155.3 89.7 169.0 99.7 180.0 96.0 C191.0 92.3 199.5 73.8 209.0 67.0 C218.5 60.2 225.0 48.8 237.0 55.0 C249.0 61.2 265.3 93.7 281.0 104.0 C296.7 114.3 313.5 116.0 331.0 117.0 C348.5 118.0 361.8 118.0 386.0 110.0 C410.2 102.0 461.0 75.8 476.0 69.0"/>
<path d="M-14.0 145.9 C-11.7 144.8 -7.8 142.9 0.0 139.5 C7.8 136.2 22.0 130.2 33.0 125.8 C44.0 121.4 53.8 117.8 66.0 113.2 C78.2 108.6 93.2 101.6 106.0 98.1 C118.8 94.7 130.7 92.7 143.0 92.3 C155.3 92.0 169.0 99.8 180.0 96.0 C191.0 92.2 199.5 75.7 209.0 69.5 C218.5 63.3 225.0 52.6 237.0 58.7 C249.0 64.9 265.3 96.1 281.0 106.4 C296.7 116.7 313.5 119.2 331.0 120.4 C348.5 121.6 361.8 121.4 386.0 113.5 C410.2 105.6 461.0 79.7 476.0 72.9"/>
<path d="M-14.0 150.8 C-11.7 149.8 -7.8 148.1 0.0 145.0 C7.8 142.0 22.0 136.6 33.0 132.7 C44.0 128.7 53.8 126.2 66.0 121.4 C78.2 116.7 93.2 108.6 106.0 104.3 C118.8 100.0 130.7 97.0 143.0 95.6 C155.3 94.2 169.0 99.9 180.0 96.0 C191.0 92.1 199.5 77.6 209.0 72.0 C218.5 66.4 225.0 56.3 237.0 62.5 C249.0 68.6 265.3 98.6 281.0 108.8 C296.7 119.0 313.5 122.4 331.0 123.8 C348.5 125.1 361.8 124.9 386.0 117.0 C410.2 109.2 461.0 83.6 476.0 76.9"/>
<path d="M-14.0 155.7 C-11.7 154.8 -7.8 153.3 0.0 150.6 C7.8 147.9 22.0 143.0 33.0 139.5 C44.0 136.0 53.8 134.5 66.0 129.6 C78.2 124.8 93.2 115.5 106.0 110.4 C118.8 105.3 130.7 101.3 143.0 98.9 C155.3 96.5 169.0 100.1 180.0 96.0 C191.0 91.9 199.5 79.4 209.0 74.5 C218.5 69.5 225.0 60.0 237.0 66.2 C249.0 72.3 265.3 101.1 281.0 111.2 C296.7 121.4 313.5 125.6 331.0 127.1 C348.5 128.7 361.8 128.3 386.0 120.6 C410.2 112.8 461.0 87.4 476.0 80.8"/>
<path d="M-14.0 160.6 C-11.7 159.8 -7.8 158.5 0.0 156.1 C7.8 153.7 22.0 149.4 33.0 146.3 C44.0 143.3 53.8 142.8 66.0 137.9 C78.2 132.9 93.2 122.5 106.0 116.6 C118.8 110.6 130.7 105.7 143.0 102.3 C155.3 98.8 169.0 100.2 180.0 96.0 C191.0 91.8 199.5 81.3 209.0 76.9 C218.5 72.6 225.0 63.8 237.0 69.9 C249.0 76.0 265.3 103.6 281.0 113.7 C296.7 123.8 313.5 128.8 331.0 130.5 C348.5 132.3 361.8 131.7 386.0 124.1 C410.2 116.4 461.0 91.3 476.0 84.7"/>
<path d="M-14.0 165.5 C-11.7 164.9 -7.8 163.7 0.0 161.6 C7.8 159.5 22.0 155.8 33.0 153.2 C44.0 150.6 53.8 151.1 66.0 146.1 C78.2 141.0 93.2 129.5 106.0 122.7 C118.8 116.0 130.7 110.0 143.0 105.6 C155.3 101.1 169.0 100.4 180.0 96.0 C191.0 91.6 199.5 83.2 209.0 79.4 C218.5 75.7 225.0 67.5 237.0 73.6 C249.0 79.7 265.3 106.0 281.0 116.1 C296.7 126.1 313.5 132.0 331.0 133.9 C348.5 135.8 361.8 135.1 386.0 127.6 C410.2 120.1 461.0 95.2 476.0 88.7"/>
<path d="M-14.0 170.4 C-11.7 169.9 -7.8 168.9 0.0 167.1 C7.8 165.4 22.0 162.1 33.0 160.0 C44.0 157.9 53.8 159.5 66.0 154.3 C78.2 149.1 93.2 136.4 106.0 128.9 C118.8 121.3 130.7 114.4 143.0 108.9 C155.3 103.4 169.0 100.5 180.0 96.0 C191.0 91.5 199.5 85.0 209.0 81.9 C218.5 78.8 225.0 71.3 237.0 77.4 C249.0 83.5 265.3 108.5 281.0 118.5 C296.7 128.5 313.5 135.2 331.0 137.3 C348.5 139.4 361.8 138.6 386.0 131.1 C410.2 123.7 461.0 99.0 476.0 92.6"/>
<path d="M-14.0 175.3 C-11.7 174.9 -7.8 174.1 0.0 172.6 C7.8 171.2 22.0 168.5 33.0 166.8 C44.0 165.1 53.8 167.8 66.0 162.5 C78.2 157.2 93.2 143.4 106.0 135.0 C118.8 126.6 130.7 118.7 143.0 112.2 C155.3 105.7 169.0 100.6 180.0 96.0 C191.0 91.4 199.5 86.9 209.0 84.4 C218.5 81.9 225.0 75.0 237.0 81.1 C249.0 87.2 265.3 111.0 281.0 120.9 C296.7 130.8 313.5 138.4 331.0 140.7 C348.5 143.0 361.8 142.0 386.0 134.6 C410.2 127.3 461.0 102.9 476.0 96.5"/>
<path d="M-14.0 180.2 C-11.7 179.9 -7.8 179.3 0.0 178.2 C7.8 177.1 22.0 174.9 33.0 173.7 C44.0 172.4 53.8 176.1 66.0 170.7 C78.2 165.3 93.2 150.3 106.0 141.1 C118.8 131.9 130.7 123.0 143.0 115.5 C155.3 108.0 169.0 100.8 180.0 96.0 C191.0 91.2 199.5 88.7 209.0 86.9 C218.5 85.0 225.0 78.7 237.0 84.8 C249.0 90.9 265.3 113.5 281.0 123.3 C296.7 133.2 313.5 141.6 331.0 144.1 C348.5 146.5 361.8 145.4 386.0 138.2 C410.2 130.9 461.0 106.8 476.0 100.5"/>
<path d="M-14.0 185.1 C-11.7 184.9 -7.8 184.5 0.0 183.7 C7.8 182.9 22.0 181.3 33.0 180.5 C44.0 179.7 53.8 184.4 66.0 178.9 C78.2 173.4 93.2 157.3 106.0 147.3 C118.8 137.3 130.7 127.4 143.0 118.8 C155.3 110.3 169.0 100.9 180.0 96.0 C191.0 91.1 199.5 90.6 209.0 89.4 C218.5 88.1 225.0 82.5 237.0 88.5 C249.0 94.6 265.3 115.9 281.0 125.7 C296.7 135.6 313.5 144.8 331.0 147.4 C348.5 150.1 361.8 148.8 386.0 141.7 C410.2 134.5 461.0 110.6 476.0 104.4"/>
<path d="M-14.0 190.0 C-11.7 189.9 -7.8 189.7 0.0 189.2 C7.8 188.8 22.0 187.7 33.0 187.3 C44.0 187.0 53.8 192.8 66.0 187.1 C78.2 181.5 93.2 164.3 106.0 153.4 C118.8 142.6 130.7 131.7 143.0 122.1 C155.3 112.6 169.0 101.0 180.0 96.0 C191.0 91.0 199.5 92.5 209.0 91.8 C218.5 91.2 225.0 86.2 237.0 92.3 C249.0 98.3 265.3 118.4 281.0 128.2 C296.7 137.9 313.5 148.0 331.0 150.8 C348.5 153.7 361.8 152.3 386.0 145.2 C410.2 138.1 461.0 114.5 476.0 108.3"/>
<path d="M-14.0 194.9 C-11.7 194.9 -7.8 194.9 0.0 194.7 C7.8 194.6 22.0 194.1 33.0 194.2 C44.0 194.3 53.8 201.1 66.0 195.3 C78.2 189.6 93.2 171.2 106.0 159.6 C118.8 147.9 130.7 136.0 143.0 125.4 C155.3 114.8 169.0 101.2 180.0 96.0 C191.0 90.8 199.5 94.3 209.0 94.3 C218.5 94.3 225.0 90.0 237.0 96.0 C249.0 102.0 265.3 120.9 281.0 130.6 C296.7 140.3 313.5 151.2 331.0 154.2 C348.5 157.2 361.8 155.7 386.0 148.7 C410.2 141.7 461.0 118.3 476.0 112.3"/>
<path d="M-14.0 199.8 C-11.7 199.9 -7.8 200.1 0.0 200.3 C7.8 200.5 22.0 200.4 33.0 201.0 C44.0 201.5 53.8 209.4 66.0 203.6 C78.2 197.7 93.2 178.2 106.0 165.7 C118.8 153.2 130.7 140.4 143.0 128.8 C155.3 117.1 169.0 101.3 180.0 96.0 C191.0 90.7 199.5 96.2 209.0 96.8 C218.5 97.4 225.0 93.7 237.0 99.7 C249.0 105.7 265.3 123.3 281.0 133.0 C296.7 142.6 313.5 154.4 331.0 157.6 C348.5 160.8 361.8 159.1 386.0 152.2 C410.2 145.3 461.0 122.2 476.0 116.2"/>
<path d="M-14.0 204.7 C-11.7 204.9 -7.8 205.3 0.0 205.8 C7.8 206.3 22.0 206.8 33.0 207.8 C44.0 208.8 53.8 217.8 66.0 211.8 C78.2 205.8 93.2 185.1 106.0 171.8 C118.8 158.6 130.7 144.7 143.0 132.1 C155.3 119.4 169.0 101.5 180.0 96.0 C191.0 90.5 199.5 98.1 209.0 99.3 C218.5 100.5 225.0 97.4 237.0 103.4 C249.0 109.5 265.3 125.8 281.0 135.4 C296.7 145.0 313.5 157.6 331.0 161.0 C348.5 164.4 361.8 162.6 386.0 155.8 C410.2 149.0 461.0 126.1 476.0 120.1"/>
<path d="M-14.0 209.6 C-11.7 209.9 -7.8 210.5 0.0 211.3 C7.8 212.1 22.0 213.2 33.0 214.7 C44.0 216.1 53.8 226.1 66.0 220.0 C78.2 213.9 93.2 192.1 106.0 178.0 C118.8 163.9 130.7 149.0 143.0 135.4 C155.3 121.7 169.0 101.6 180.0 96.0 C191.0 90.4 199.5 99.9 209.0 101.8 C218.5 103.6 225.0 101.2 237.0 107.2 C249.0 113.2 265.3 128.3 281.0 137.8 C296.7 147.3 313.5 160.8 331.0 164.3 C348.5 167.9 361.8 166.0 386.0 159.3 C410.2 152.6 461.0 129.9 476.0 124.1"/>
<path d="M-14.0 215.7 C-11.7 215.9 -7.8 216.3 0.0 217.0 C7.8 217.6 22.0 218.4 33.0 219.6 C44.0 220.7 53.8 229.7 66.0 224.0 C78.2 218.3 93.2 198.9 106.0 185.6 C118.8 172.4 130.7 157.6 143.0 144.5 C155.3 131.5 169.0 112.7 180.0 107.1 C191.0 101.5 199.5 109.4 209.0 111.0 C218.5 112.6 225.0 111.2 237.0 116.5 C249.0 121.8 265.3 134.2 281.0 142.8 C296.7 151.3 313.5 164.6 331.0 167.9 C348.5 171.1 361.8 169.2 386.0 162.4 C410.2 155.7 461.0 133.2 476.0 127.4"/>
<path d="M-14.0 222.8 C-11.7 222.8 -7.8 222.9 0.0 222.9 C7.8 222.8 22.0 222.4 33.0 222.6 C44.0 222.8 53.8 228.7 66.0 224.0 C78.2 219.3 93.2 205.5 106.0 194.7 C118.8 183.9 130.7 170.3 143.0 159.3 C155.3 148.3 169.0 134.3 180.0 128.8 C191.0 123.4 199.5 126.2 209.0 126.6 C218.5 127.1 225.0 127.4 237.0 131.3 C249.0 135.2 265.3 143.5 281.0 150.2 C296.7 156.9 313.5 169.0 331.0 171.5 C348.5 174.0 361.8 172.2 386.0 165.3 C410.2 158.4 461.0 135.9 476.0 130.1"/>
<path d="M-14.0 230.0 C-11.7 229.8 -7.8 229.5 0.0 228.7 C7.8 228.0 22.0 226.5 33.0 225.7 C44.0 224.9 53.8 227.7 66.0 224.0 C78.2 220.3 93.2 212.2 106.0 203.7 C118.8 195.2 130.7 182.2 143.0 173.0 C155.3 163.8 169.0 154.0 180.0 148.7 C191.0 143.5 199.5 142.2 209.0 141.6 C218.5 140.9 225.0 142.5 237.0 145.1 C249.0 147.7 265.3 152.4 281.0 157.4 C296.7 162.4 313.5 173.4 331.0 175.1 C348.5 176.9 361.8 175.1 386.0 168.1 C410.2 161.0 461.0 138.7 476.0 132.8"/>
<path d="M-14.0 237.2 C-11.7 236.7 -7.8 236.0 0.0 234.6 C7.8 233.2 22.0 230.5 33.0 228.7 C44.0 227.0 53.8 227.2 66.0 224.0 C78.2 220.8 93.2 216.6 106.0 209.7 C118.8 202.7 130.7 190.6 143.0 182.6 C155.3 174.6 169.0 166.6 180.0 161.8 C191.0 157.0 199.5 154.8 209.0 153.7 C218.5 152.6 225.0 153.4 237.0 155.1 C249.0 156.8 265.3 159.9 281.0 163.9 C296.7 167.8 313.5 177.6 331.0 178.8 C348.5 180.0 361.8 178.1 386.0 170.9 C410.2 163.7 461.0 141.4 476.0 135.5"/>
<path d="M-14.0 244.3 C-11.7 243.7 -7.8 242.6 0.0 240.5 C7.8 238.4 22.0 234.5 33.0 231.8 C44.0 229.0 53.8 226.9 66.0 224.0 C78.2 221.1 93.2 219.8 106.0 214.5 C118.8 209.2 130.7 198.8 143.0 192.1 C155.3 185.5 169.0 179.2 180.0 174.8 C191.0 170.5 199.5 167.5 209.0 165.9 C218.5 164.3 225.0 164.3 237.0 165.1 C249.0 165.9 265.3 167.5 281.0 170.4 C296.7 173.3 313.5 181.9 331.0 182.4 C348.5 183.0 361.8 181.1 386.0 173.7 C410.2 166.3 461.0 144.1 476.0 138.2"/>
<path d="M-14.0 251.5 C-11.7 250.6 -7.8 249.2 0.0 246.4 C7.8 243.6 22.0 238.6 33.0 234.8 C44.0 231.1 53.8 226.6 66.0 224.0 C78.2 221.4 93.2 222.7 106.0 219.4 C118.8 216.0 130.7 209.3 143.0 203.9 C155.3 198.6 169.0 191.7 180.0 187.1 C191.0 182.5 199.5 178.8 209.0 176.5 C218.5 174.2 225.0 172.5 237.0 173.5 C249.0 174.5 265.3 180.5 281.0 182.6 C296.7 184.7 313.5 187.1 331.0 186.1 C348.5 185.1 361.8 184.1 386.0 176.5 C410.2 169.0 461.0 146.8 476.0 140.9"/>
<path d="M-14.0 258.7 C-11.7 257.6 -7.8 255.7 0.0 252.2 C7.8 248.8 22.0 242.6 33.0 237.9 C44.0 233.2 53.8 226.3 66.0 224.0 C78.2 221.7 93.2 225.6 106.0 224.3 C118.8 222.9 130.7 220.1 143.0 216.0 C155.3 211.8 169.0 204.1 180.0 199.3 C191.0 194.4 199.5 189.8 209.0 186.9 C218.5 184.0 225.0 180.4 237.0 181.8 C249.0 183.2 265.3 194.1 281.0 195.4 C296.7 196.7 313.5 192.4 331.0 189.7 C348.5 187.0 361.8 187.0 386.0 179.4 C410.2 171.7 461.0 149.6 476.0 143.6"/>
<path d="M-14.0 265.8 C-11.7 264.5 -7.8 262.3 0.0 258.1 C7.8 254.0 22.0 246.6 33.0 240.9 C44.0 235.3 53.8 226.0 66.0 224.0 C78.2 222.0 93.2 228.5 106.0 229.1 C118.8 229.8 130.7 229.8 143.0 228.0 C155.3 226.2 169.0 221.5 180.0 218.4 C191.0 215.3 199.5 211.8 209.0 209.2 C218.5 206.6 225.0 203.0 237.0 202.8 C249.0 202.6 265.3 209.8 281.0 208.2 C296.7 206.6 313.5 197.7 331.0 193.4 C348.5 189.0 361.8 190.0 386.0 182.2 C410.2 174.3 461.0 152.3 476.0 146.3"/>
<path d="M-14.0 273.0 C-11.7 271.5 -7.8 268.8 0.0 264.0 C7.8 259.2 22.0 250.7 33.0 244.0 C44.0 237.3 53.8 225.7 66.0 224.0 C78.2 222.3 93.2 231.3 106.0 234.0 C118.8 236.7 130.7 238.7 143.0 240.0 C155.3 241.3 169.0 242.2 180.0 242.0 C191.0 241.8 199.5 240.7 209.0 239.0 C218.5 237.3 225.0 235.0 237.0 232.0 C249.0 229.0 265.3 226.8 281.0 221.0 C296.7 215.2 313.5 203.0 331.0 197.0 C348.5 191.0 361.8 193.0 386.0 185.0 C410.2 177.0 461.0 155.0 476.0 149.0"/>
  </g>
  <!-- logo -->
  <path d="M413 199.3 H488 V220.3 H480.4 V209.5 H420.7 V220.3 H413 Z" fill="url(#teal)"/>
  <path d="M412.5 264.8 H420 V275 H412.5 Z M441 268 H480.4 V264.8 H488 V275 H441 Z" fill="url(#teal)"/>
  <g fill="#63a898">
   <rect x="418.8" y="275" width="8.2" height="7"/><rect x="434.7" y="275" width="6.3" height="7"/><rect x="427" y="282" width="7" height="7"/><rect x="418.8" y="289" width="7" height="7"/>
  </g>
  <g fill="none" stroke="url(#silver)" stroke-width="8.5">
   <path d="M386 216 V249 Q386 255 393 255 H398.5"/>
   <path d="M377.5 226.5 H398.5" stroke-width="7"/>
   <path d="M404 243 H428 Q428 228 415.5 228 Q403.5 228 403.5 241.5 Q403.5 255 416 255 Q422.5 255 426.5 251.5"/>
   <path d="M440.5 216 V259" stroke-width="9"/>
  </g>
  <g fill="#cfcfcf">
   <rect x="458.8" y="224" width="7.7" height="7"/><rect x="451" y="231" width="7.8" height="7"/><rect x="445" y="238" width="6" height="7"/><rect x="451" y="245" width="7.8" height="7"/><rect x="458.8" y="252" width="7.7" height="7"/>
  </g>
  <g fill="none" stroke="url(#teal)" stroke-width="8.5">
   <path d="M472.5 224 V243 Q472.5 255 484.2 255 Q496 255 496 243 V224"/>
   <path d="M527.5 230.5 Q523 227.5 515.5 227.5 Q504.5 227.5 504.5 234 Q504.5 239 515.5 241 Q527 243 527 249.5 Q527 255.5 515.5 255.5 Q507.5 255.5 503.5 252"/>
  </g>
 </svg>
</div>

<!-- page scrollbar -->
<div class="a" style="left:1910px;top:0;width:6px;height:944px;background:#f1f1f1"></div>
<div class="a" style="left:1910px;top:0;width:6px;height:863px;background:#c8c8c8;border-radius:0 0 3px 3px"></div>
</body></html>
